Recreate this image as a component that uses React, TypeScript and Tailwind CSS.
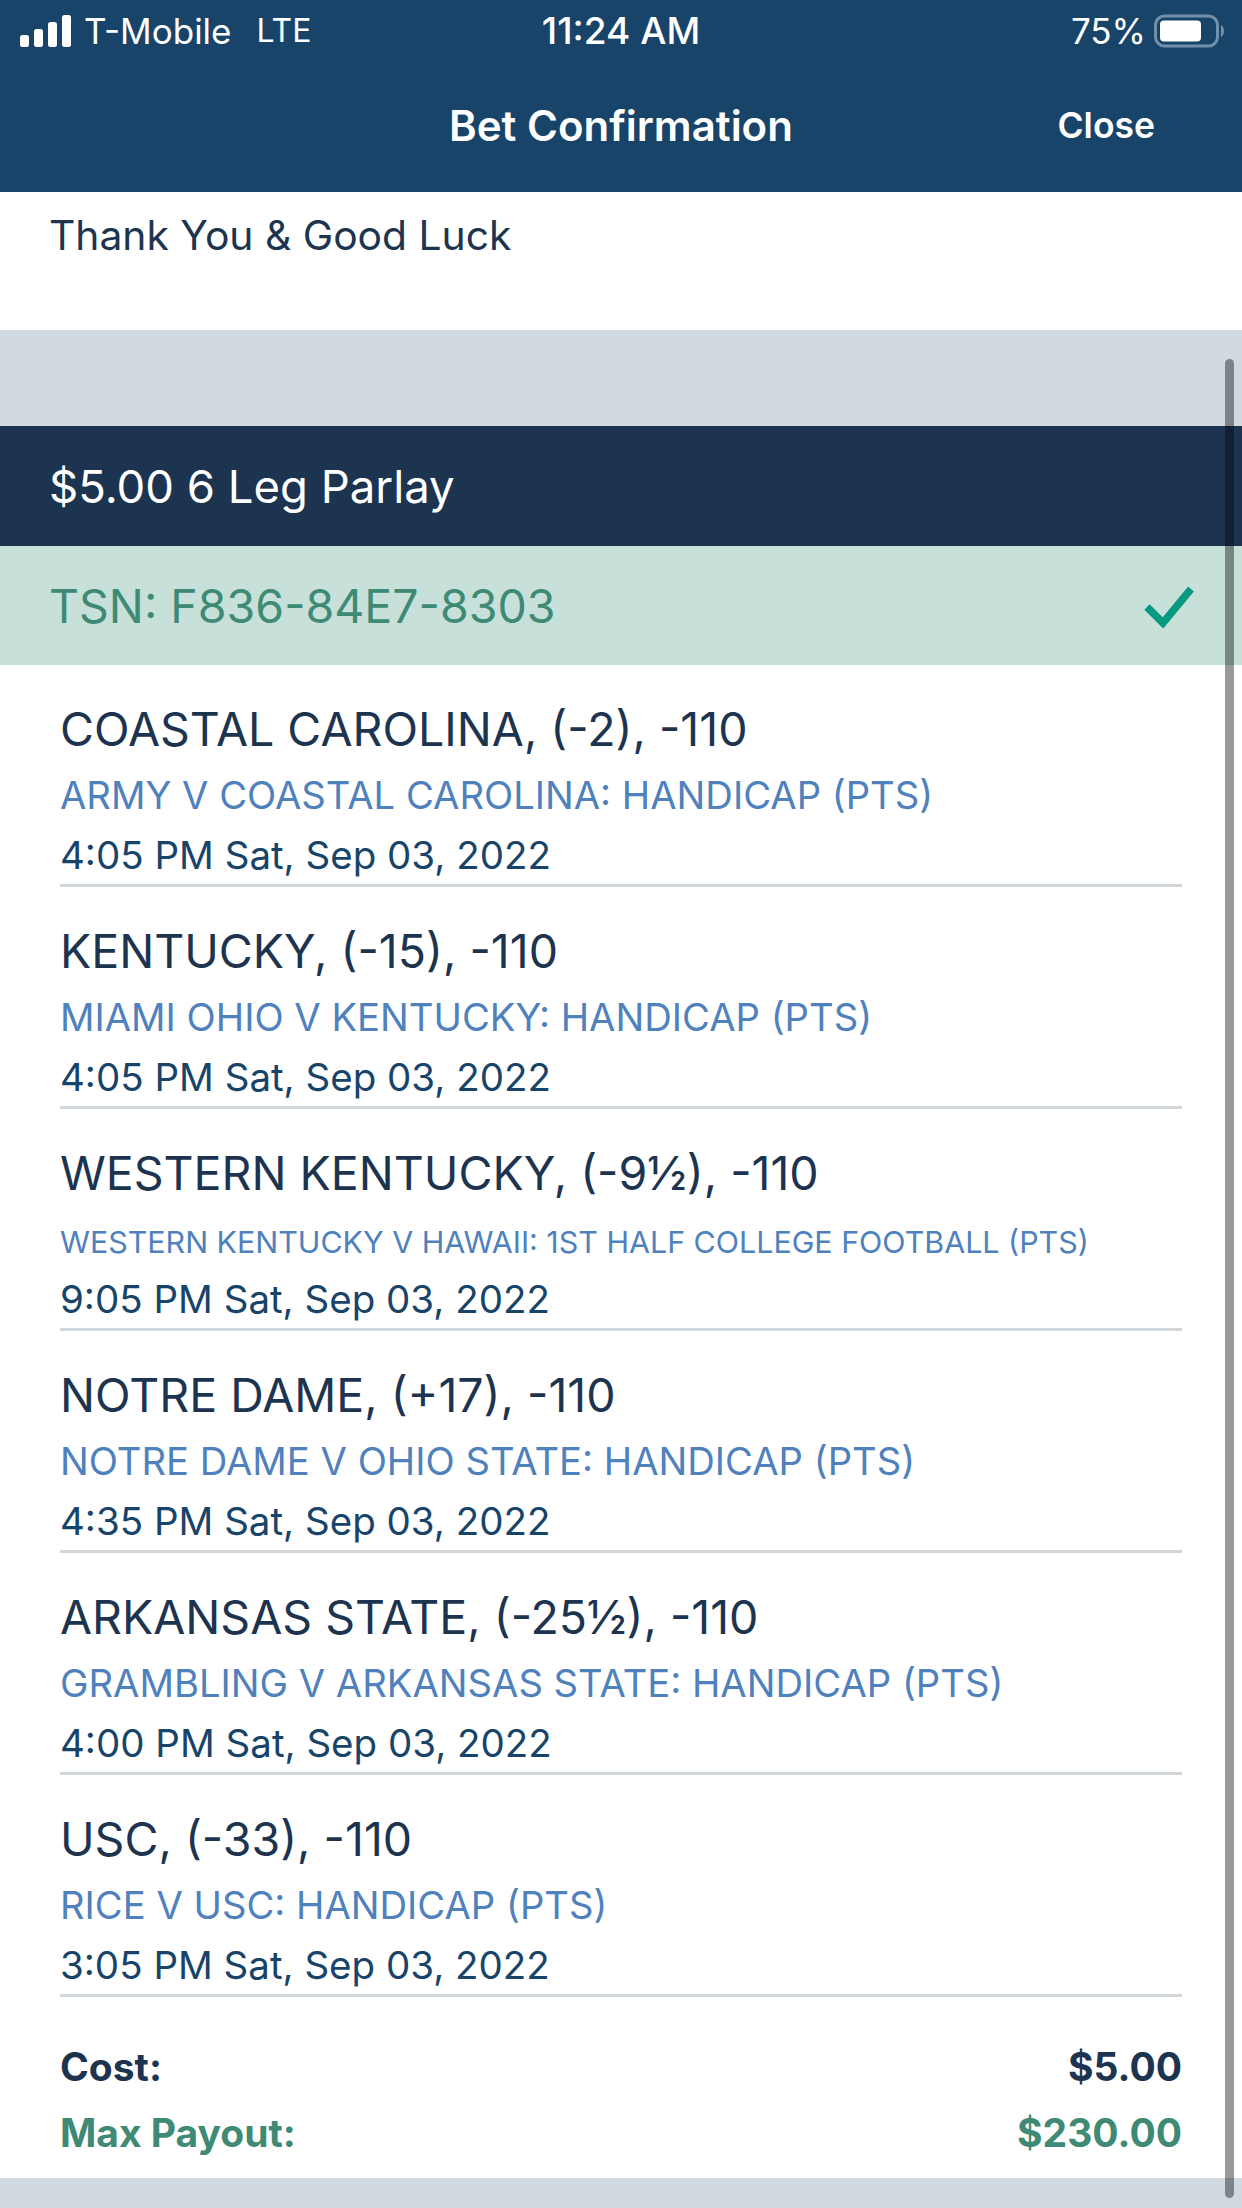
const font = { fontFamily: "Inter, 'Liberation Sans', sans-serif" };

const legs = [
  { t: "COASTAL CAROLINA, (-2), -110", m: "ARMY V COASTAL CAROLINA: HANDICAP (PTS)", d: "4:05 PM Sat, Sep 03, 2022" },
  { t: "KENTUCKY, (-15), -110", m: "MIAMI OHIO V KENTUCKY: HANDICAP (PTS)", d: "4:05 PM Sat, Sep 03, 2022" },
  { t: "WESTERN KENTUCKY, (-9½), -110", m: "WESTERN KENTUCKY V HAWAII: 1ST HALF COLLEGE FOOTBALL (PTS)", d: "9:05 PM Sat, Sep 03, 2022", small: true },
  { t: "NOTRE DAME, (+17), -110", m: "NOTRE DAME V OHIO STATE: HANDICAP (PTS)", d: "4:35 PM Sat, Sep 03, 2022" },
  { t: "ARKANSAS STATE, (-25½), -110", m: "GRAMBLING V ARKANSAS STATE: HANDICAP (PTS)", d: "4:00 PM Sat, Sep 03, 2022" },
  { t: "USC, (-33), -110", m: "RICE V USC: HANDICAP (PTS)", d: "3:05 PM Sat, Sep 03, 2022" },
];

export default function App() {
  return (
    <div className="relative w-[1242px] h-[2208px] overflow-hidden bg-[#d1dae0]" style={font}>
      <div className="h-[192px] bg-[#18446a] text-white flex flex-col">
        <div className="relative h-[62px] flex items-center justify-between pl-[20px] pr-[16px] text-[35px]">
          <div className="flex items-center">
            <svg width="52" height="33" viewBox="0 0 52 33" className="mr-[12px]" fill="#fff">
              <rect x="0" y="20" width="9" height="12" rx="2.5" />
              <rect x="14" y="14" width="9" height="18" rx="2.5" />
              <rect x="28" y="7" width="9" height="25" rx="2.5" />
              <rect x="42" y="0" width="9" height="32" rx="2.5" />
            </svg>
            <span>T-Mobile</span>
            <span className="ml-[25px] text-[32px]">LTE</span>
          </div>
          <div className="absolute left-0 right-0 text-center font-medium text-[37px]">11:24 AM</div>
          <div className="flex items-center">
            <span>75%</span>
            <svg width="72" height="36" viewBox="0 0 72 36" className="ml-[8px]">
              <rect x="1.5" y="3" width="62" height="30" rx="9" fill="none" stroke="#7390ab" strokeWidth="3" />
              <rect x="6" y="7.5" width="41" height="21" rx="4" fill="#fff" />
              <path d="M67 12 C71 14 71 22 67 24 Z" fill="#7390ab" />
            </svg>
          </div>
        </div>
        <div className="relative flex-1 flex items-center justify-center pb-[3px]">
          <div className="text-[42px] font-semibold">Bet Confirmation</div>
          <div className="absolute right-[87px] text-[35.5px] font-semibold">Close</div>
        </div>
      </div>

      <div className="h-[138px] bg-white pl-[49px] pt-[16px] text-[40.8px] leading-[54px] text-[#1d3450]">
        Thank You &amp; Good Luck
      </div>

      <div className="h-[96px]" />

      <div className="h-[120px] bg-[#1d3450] flex items-center pl-[49px] pt-[2px] text-[45.5px] text-white">
        $5.00 6 Leg Parlay
      </div>

      <div className="h-[119px] bg-[#c7e0da] flex items-center justify-between pl-[49px] pr-[48px] pt-[3px] text-[46.5px] text-[#3f8a74]">
        <span>TSN: F836-84E7-8303</span>
        <svg width="50" height="42" viewBox="0 0 50 42" fill="none">
          <path d="M3 21 L19 37 L47 3" stroke="#079a80" strokeWidth="7.5" />
        </svg>
      </div>

      <div className="h-[1513px] bg-white">
        {legs.map((l) => (
          <div key={l.t} className="mx-[60px] h-[222px] pt-[31px] pb-[2px] border-b-[3px] border-[#d2d7db]">
            <div className="text-[46.5px] leading-[66px] text-[#1d3450]">{l.t}</div>
            <div className={`text-[#4f81bd] ${l.small ? "text-[30.4px] pt-[6px] leading-[60px]" : "text-[38.2px] leading-[66px]"}`}>{l.m}</div>
            <div className="text-[38.5px] leading-[54px] text-[#18446a]">{l.d}</div>
          </div>
        ))}
        <div className="mx-[60px] pt-[37px] text-[39px] leading-[66px] font-bold">
          <div className="flex justify-between text-[#1d3450]">
            <span>Cost:</span>
            <span>$5.00</span>
          </div>
          <div className="flex justify-between text-[#3f8a74]">
            <span>Max Payout:</span>
            <span>$230.00</span>
          </div>
        </div>
      </div>

      <div className="absolute left-[1225px] top-[359px] w-[9px] h-[1839px] rounded-full bg-[#000]/40" />
    </div>
  );
}
